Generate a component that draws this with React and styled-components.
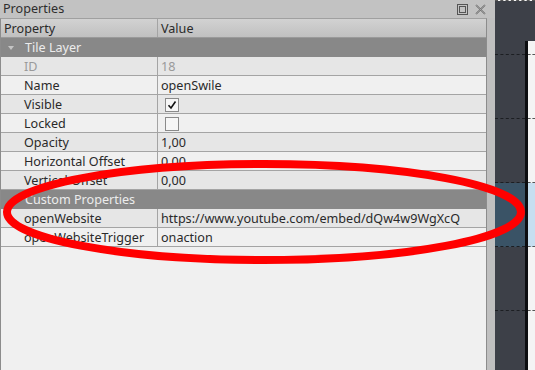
import React from "react";
import styled, { createGlobalStyle } from "styled-components";

const GlobalStyle = createGlobalStyle`
  html, body { margin: 0; padding: 0; background: #c2c2c2; }
  body { font-family: "Noto Sans", "DejaVu Sans", sans-serif; font-size: 12.6px; }
`;

const Screen = styled.div`
  position: relative;
  width: 535px;
  height: 370px;
  display: flex;
  overflow: hidden;
`;

const Panel = styled.div`
  width: 495px;
  background: #c2c2c2;
  display: flex;
  flex-direction: column;
`;

const TitleBar = styled.div`
  height: 18px;
  display: flex;
  align-items: center;
  padding: 0 9px 0 3px;
  color: #2e2e2e;
  line-height: 18px;
`;

const Title = styled.div`
  flex: 1;
`;

const TitleIcons = styled.div`
  display: flex;
  gap: 7px;
  align-items: center;
`;

const Body = styled.div`
  flex: 1;
  display: flex;
`;

const Table = styled.div`
  width: 487px;
  background: #f0f0f0;
  border-top: 1px solid #a0a0a0;
  border-left: 1px solid #8c8c8c;
  border-right: 1px solid #8c8c8c;
  display: flex;
  flex-direction: column;
`;

const Row = styled.div`
  display: grid;
  grid-template-columns: 157px 1fr;
  height: 19px;
  box-sizing: border-box;
  border-bottom: 1px solid ${(p) => (p.$header ? "#9a9a9a" : "#a4a4a4")};
  background: ${(p) =>
    p.$header ? "linear-gradient(#d2d2d2, #c0c0c0)" : p.$alt ? "#e6e6e6" : "#f0f0f0"};
  color: ${(p) => (p.$disabled ? "#9a9a9a" : "#2a2a2a")};
`;

const Cell = styled.div`
  display: flex;
  align-items: center;
  padding-left: ${(p) => p.$indent}px;
  padding-top: 1px;
  border-right: ${(p) => (p.$first ? "1px solid #a4a4a4" : "none")};
  white-space: nowrap;
  overflow: hidden;
  line-height: 17px;
`;

const GroupRow = styled.div`
  height: 19px;
  background: #888888;
  color: #ececec;
  display: flex;
  align-items: center;
  line-height: 19px;
`;

const Arrow = styled.span`
  width: 0;
  height: 0;
  margin: 0 11px 0 7px;
  border-left: 3px solid transparent;
  border-right: 3px solid transparent;
  border-top: 4px solid ${(p) => (p.$hidden ? "transparent" : "#c4c4c4")};
`;

const Check = styled.div`
  width: 12px;
  height: 12px;
  margin-left: 4px;
  border: 1px solid #8a8a8a;
  background: #f6f6f6;
  display: flex;
  align-items: center;
  justify-content: center;
`;

const Splitter = styled.div`
  width: 8px;
  background: #c0c0c0;
`;

const MapView = styled.div`
  flex: 1;
  display: flex;
  flex-direction: column;
  background: #3d4048;
`;

const MapTop = styled.div`
  height: 9px;
  background: #fafafa;
  border-top: 1px dashed #555;
  box-sizing: border-box;
`;

const MapTopEdge = styled.div`
  height: 3px;
  background: #16191d;
  margin-bottom: 40px;
`;

const MapArea = styled.div`
  flex: 1;
  display: flex;
`;

const DarkCol = styled.div`
  width: 30px;
  display: flex;
  flex-direction: column;
`;

const EdgeCol = styled.div`
  width: 3px;
  background: #0c0d10;
`;

const LightCol = styled.div`
  flex: 1;
  background: #f4f4f4;
  display: flex;
  flex-direction: column;
  padding-top: 5px;
`;

const Tile = styled.div`
  flex: none;
  height: ${(p) => p.$h}px;
  box-sizing: border-box;
  border-bottom: 1px dashed ${(p) => (p.$light ? "#555" : "#1c1e22")};
  background: ${(p) =>
    p.$sel ? (p.$light ? "#c6dff0" : "#3a5366") : "transparent"};
`;

const Overlay = styled.svg`
  position: absolute;
  left: 0;
  top: 0;
  pointer-events: none;
`;

const FloatIcon = () => (
  <svg width="11" height="11" viewBox="0 0 11 11">
    <rect x="0.5" y="0.5" width="10" height="10" fill="none" stroke="#555" />
    <rect x="2.5" y="2.5" width="6" height="6" fill="none" stroke="#555" />
  </svg>
);

const CloseIcon = () => (
  <svg width="11" height="11" viewBox="0 0 11 11">
    <path d="M1 1L10 10M10 1L1 10" stroke="#666" strokeWidth="1.6" />
    <path d="M1 1L10 10M10 1L1 10" stroke="#c2c2c2" strokeWidth="0.5" />
  </svg>
);

const CheckBox = ({ checked }) => (
  <Check>
    {checked && (
      <svg width="10" height="10" viewBox="0 0 10 10">
        <path d="M1.5 5.2L4 8L8.5 1.5" fill="none" stroke="#111" strokeWidth="1.6" />
      </svg>
    )}
  </Check>
);

const layerProps = [
  { name: "ID", value: "18", disabled: true },
  { name: "Name", value: "openSwile" },
  { name: "Visible", check: true, checked: true },
  { name: "Locked", check: true, checked: false },
  { name: "Opacity", value: "1,00" },
  { name: "Horizontal Offset", value: "0,00" },
  { name: "Vertical Offset", value: "0,00" },
];

const customProps = [
  { name: "openWebsite", value: "https://www.youtube.com/embed/dQw4w9WgXcQ" },
  { name: "openWebsiteTrigger", value: "onaction" },
];

const PropRow = ({ item, alt }) => (
  <Row $alt={alt} $disabled={item.disabled}>
    <Cell $first $indent={23}>{item.name}</Cell>
    <Cell $indent={3}>
      {item.check ? <CheckBox checked={item.checked} /> : item.value}
    </Cell>
  </Row>
);

const tiles = [
  { h: 14 },
  { h: 64 },
  { h: 64 },
  { h: 64, sel: true },
  { h: 64 },
  { h: 64 },
];

const App = () => {
  return (
    <>
      <GlobalStyle />
      <Screen>
        <Panel>
          <TitleBar>
            <Title>Properties</Title>
            <TitleIcons>
              <FloatIcon />
              <CloseIcon />
            </TitleIcons>
          </TitleBar>
          <Body>
            <Table>
              <Row $header>
                <Cell $first $indent={3}>Property</Cell>
                <Cell $indent={3}>Value</Cell>
              </Row>
              <GroupRow>
                <Arrow />
                Tile Layer
              </GroupRow>
              {layerProps.map((p, i) => (
                <PropRow key={p.name} item={p} alt={i % 2 === 0} />
              ))}
              <GroupRow>
                <Arrow $hidden />
                Custom Properties
              </GroupRow>
              {customProps.map((p, i) => (
                <PropRow key={p.name} item={p} alt={i % 2 === 0} />
              ))}
            </Table>
            <Splitter />
          </Body>
        </Panel>
        <MapView>
          <MapTop />
          <MapTopEdge />
          <MapArea>
            <DarkCol>
              {tiles.map((t, i) => (
                <Tile key={i} $h={t.h} $sel={t.sel} />
              ))}
            </DarkCol>
            <EdgeCol />
            <LightCol>
              {tiles.map((t, i) => (
                <Tile key={i} $h={i === 0 ? 9 : t.h} $sel={t.sel} $light />
              ))}
            </LightCol>
          </MapArea>
        </MapView>
        <Overlay width="535" height="370" viewBox="0 0 535 370">
          <ellipse
            cx="264"
            cy="212"
            rx="257"
            ry="48"
            fill="none"
            stroke="#ff0000"
            strokeWidth="8"
          />
        </Overlay>
      </Screen>
    </>
  );
};

export default App;
